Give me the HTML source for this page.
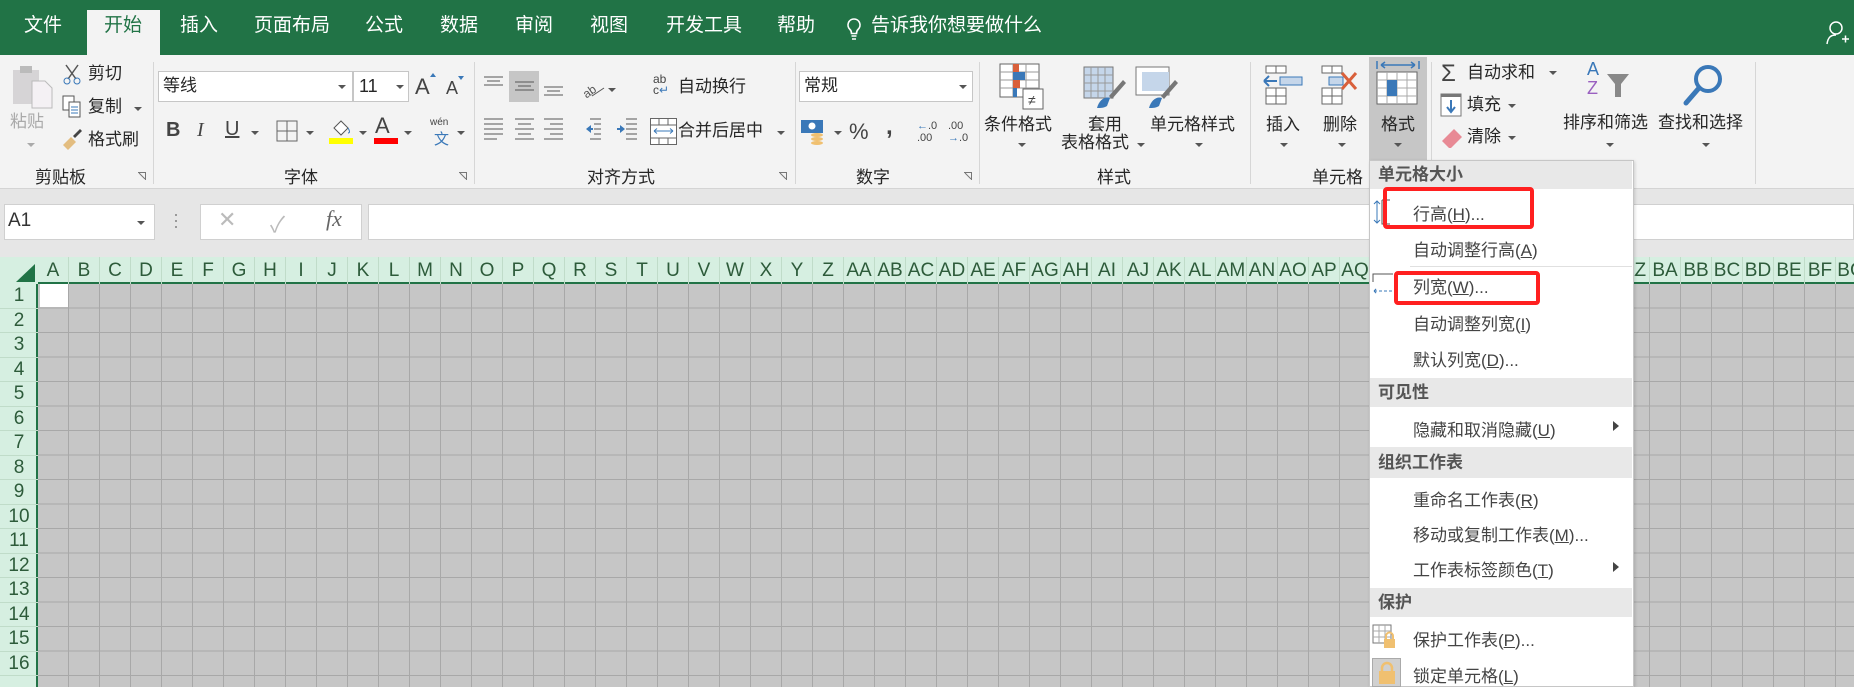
<!DOCTYPE html>
<html><head><meta charset="utf-8">
<style>
*{margin:0;padding:0;box-sizing:border-box}
body{width:1854px;height:687px;overflow:hidden;background:#f3f3f3;font-family:"Liberation Sans","Noto Sans CJK SC",sans-serif;color:#262626;position:relative}
.a{position:absolute;white-space:nowrap}
.tab{position:absolute;top:14px;font-size:19px;color:#fff;line-height:24px}
.lbl{position:absolute;font-size:17px;line-height:20px;color:#262626}
.glab{position:absolute;top:163px;font-size:17px;color:#262626}
.sep{position:absolute;top:62px;width:1px;height:122px;background:#d6d6d6}
.dd{position:absolute;width:0;height:0;border-left:4px solid transparent;border-right:4px solid transparent;border-top:4px solid #555}
.mi{position:absolute;left:1413px;font-size:17px;color:#444}
.mh{position:absolute;left:1370px;width:262px;background:#e8e8e8;font-weight:bold;font-size:17px;color:#555;padding-left:8px}
.ch{position:absolute;top:257px;height:27px;width:31px;text-align:center;font-size:19px;line-height:27px;color:#2d5b3a;border-right:1px solid #c0dcc9}
.rh{position:absolute;left:0;width:38px;height:24.5px;text-align:center;font-size:19px;line-height:24px;color:#2d5b3a;border-bottom:1px solid #c0dcc9}
</style></head><body>
<div class="a" style="left:0;top:0;width:1854px;height:55px;background:#217346"></div>
<div class="a" style="left:87px;top:10px;width:73px;height:45px;background:#f3f3f3"></div>
<div class="tab" style="left:24px">文件</div>
<div class="tab" style="left:104px;color:#217346">开始</div>
<div class="tab" style="left:180px">插入</div>
<div class="tab" style="left:254px">页面布局</div>
<div class="tab" style="left:365px">公式</div>
<div class="tab" style="left:440px">数据</div>
<div class="tab" style="left:515px">审阅</div>
<div class="tab" style="left:590px">视图</div>
<div class="tab" style="left:666px">开发工具</div>
<div class="tab" style="left:777px">帮助</div>
<svg class="a" style="left:846px;top:17px" width="16" height="26"><path d="M8 2a6 6 0 0 0-4 10.5c1 1 1.5 2 1.5 4h5c0-2 .5-3 1.5-4A6 6 0 0 0 8 2zM5.5 19h5M6 22h4" stroke="#fff" stroke-width="1.6" fill="none"/></svg>
<div class="tab" style="left:871px">告诉我你想要做什么</div>
<svg class="a" style="left:1826px;top:20px" width="24" height="26"><circle cx="10" cy="8" r="6" stroke="#fff" stroke-width="1.5" fill="none"/><path d="M1 24c1-7 4-9 9-9M16 19h7M19.5 15.5v7" stroke="#fff" stroke-width="1.5" fill="none"/></svg>

<div class="a" style="left:0;top:188px;width:1854px;height:1px;background:#d4d4d4"></div>
<div class="sep" style="left:153px"></div><div class="sep" style="left:474px"></div><div class="sep" style="left:795px"></div><div class="sep" style="left:979px"></div><div class="sep" style="left:1250px"></div><div class="sep" style="left:1431px"></div><div class="sep" style="left:1755px"></div>

<svg class="a" style="left:12px;top:64px" width="42" height="46"><rect x="1" y="6" width="26" height="34" fill="#d6d4d6"/><rect x="8" y="2" width="12" height="7" fill="#bbb"/><path d="M20 17h13l7 7v20H20z" fill="#f4f1f4" stroke="#bbb"/></svg>
<div class="lbl" style="left:10px;top:112px;color:#aaa">粘贴</div>
<div class="dd" style="left:27px;top:143px;border-top-color:#aaa"></div>
<svg class="a" style="left:62px;top:63px" width="20" height="22"><path d="M4 2l10 14M16 2L6 16" stroke="#555" stroke-width="1.5"/><circle cx="5" cy="18" r="3" stroke="#3a78b8" fill="none"/><circle cx="15" cy="18" r="3" stroke="#3a78b8" fill="none"/></svg>
<div class="lbl" style="left:88px;top:64px">剪切</div>
<svg class="a" style="left:62px;top:95px" width="20" height="24"><rect x="1" y="1" width="11" height="14" fill="#fff" stroke="#555"/><rect x="7" y="7" width="11" height="15" fill="#fff" stroke="#555"/><path d="M9 12h7M9 15h7M9 18h7" stroke="#3a78b8"/></svg>
<div class="lbl" style="left:88px;top:97px">复制</div><div class="dd" style="left:134px;top:107px"></div>
<svg class="a" style="left:61px;top:127px" width="22" height="24"><path d="M2 18l8-8 5 5-8 8z" fill="#e3bd80"/><path d="M12 9l7-7 2 2-7 7z" fill="#444"/></svg>
<div class="lbl" style="left:88px;top:130px">格式刷</div>
<div class="glab" style="left:35px">剪贴板</div>
<svg class="a" style="left:138px;top:172px" width="8" height="8"><path d="M0 .5h7.5V8M1 1l6 6" stroke="#777" fill="none"/></svg>

<div class="a" style="left:158px;top:71px;width:195px;height:31px;background:#fff;border:1px solid #c6c6c6"></div>
<div class="lbl" style="left:163px;top:76px">等线</div><div class="dd" style="left:338px;top:85px"></div>
<div class="a" style="left:353px;top:71px;width:56px;height:31px;background:#fff;border:1px solid #c6c6c6"></div>
<div class="lbl" style="left:359px;top:76px;font-size:18px">11</div><div class="dd" style="left:396px;top:85px"></div>
<div class="a" style="left:415px;top:74px;font-size:22px;color:#444">A</div><div class="a" style="left:430px;top:73px;border-left:3px solid transparent;border-right:3px solid transparent;border-bottom:4px solid #3a78b8"></div>
<div class="a" style="left:446px;top:78px;font-size:18px;color:#444">A</div><div class="a" style="left:458px;top:76px;border-left:3px solid transparent;border-right:3px solid transparent;border-top:4px solid #3a78b8"></div>
<div class="a" style="left:166px;top:119px;font-size:20px;font-weight:bold;color:#444">B</div>
<div class="a" style="left:197px;top:119px;font-size:20px;font-style:italic;font-family:'Liberation Serif',serif;color:#444">I</div>
<div class="a" style="left:225px;top:118px;font-size:20px;text-decoration:underline;color:#444">U</div><div class="dd" style="left:251px;top:131px"></div>
<svg class="a" style="left:276px;top:120px" width="22" height="22"><rect x="1" y="1" width="20" height="20" stroke="#666" fill="none"/><path d="M11 1v20M1 11h20" stroke="#666"/></svg><div class="dd" style="left:306px;top:131px"></div>
<svg class="a" style="left:329px;top:116px" width="24" height="28"><path d="M5 12l7-7 7 7-7 7z" stroke="#555" fill="#fff"/><path d="M19 12c2 3 2 5 0 5" stroke="#3a78b8" fill="none"/><rect x="0" y="22" width="24" height="6" fill="#ffff00"/></svg><div class="dd" style="left:359px;top:131px"></div>
<div class="a" style="left:375px;top:113px;font-size:22px;color:#444">A</div><div class="a" style="left:374px;top:138px;width:24px;height:6px;background:#f00"></div><div class="dd" style="left:404px;top:131px"></div>
<div class="a" style="left:430px;top:117px;font-size:10px;color:#444">wén</div><div class="a" style="left:434px;top:128px;font-size:15px;color:#3a78b8">文</div><div class="dd" style="left:457px;top:131px"></div>
<div class="glab" style="left:284px">字体</div>
<svg class="a" style="left:459px;top:172px" width="8" height="8"><path d="M0 .5h7.5V8M1 1l6 6" stroke="#777" fill="none"/></svg>

<div class="a" style="left:509px;top:71px;width:30px;height:31px;background:#c6c6c6"></div>
<svg class="a" style="left:484px;top:74px" width="90" height="26"><g stroke="#555"><path d="M0 3h19M3 7h13M0 11h19"/><path d="M31 8h19M34 12h13M31 16h19"/><path d="M60 13h19M63 17h13M60 21h19"/></g></svg>
<svg class="a" style="left:582px;top:78px" width="24" height="22"><text x="0" y="17" font-size="12" fill="#555" transform="rotate(-35 8 12)">ab</text><path d="M10 18l12-8" stroke="#555"/></svg><div class="dd" style="left:608px;top:88px"></div>
<svg class="a" style="left:484px;top:117px" width="160" height="28"><g stroke="#555"><path d="M0 2h19M0 7h19M0 12h19M0 17h19M0 22h13"/><path d="M31 2h19M34 7h13M31 12h19M34 17h13M31 22h19"/><path d="M60 2h19M66 7h13M60 12h19M66 17h13M60 22h19"/><path d="M106 2h11M110 7h7M110 12h7M110 17h7M106 22h11"/><path d="M142 2h11M142 7h11M142 12h11M142 17h11M142 22h11"/></g><path d="M102 12l5-4v8z M136 8l5 4-5 4z" fill="#3a78b8"/><path d="M104 12h5M133 12h5" stroke="#3a78b8" stroke-width="2"/></svg>
<div class="a" style="left:653px;top:74px;font-size:12px;line-height:11px;color:#444">ab<br>c<span style="color:#3a78b8">↵</span></div>
<div class="lbl" style="left:678px;top:77px">自动换行</div>
<svg class="a" style="left:650px;top:118px" width="27" height="27"><rect x=".5" y=".5" width="26" height="26" stroke="#666" fill="#fff"/><path d="M1 7h25M1 20h25M9 1v6M18 1v6M9 20v6M18 20v6" stroke="#666"/><path d="M4 13h19M4 13l3-2.5M4 13l3 2.5M23 13l-3-2.5M23 13l-3 2.5" stroke="#3a78b8"/></svg>
<div class="lbl" style="left:678px;top:121px">合并后居中</div><div class="dd" style="left:777px;top:131px"></div>
<div class="glab" style="left:587px">对齐方式</div>
<svg class="a" style="left:779px;top:172px" width="8" height="8"><path d="M0 .5h7.5V8M1 1l6 6" stroke="#777" fill="none"/></svg>

<div class="a" style="left:799px;top:71px;width:174px;height:31px;background:#fff;border:1px solid #c6c6c6"></div>
<div class="lbl" style="left:804px;top:76px">常规</div><div class="dd" style="left:959px;top:85px"></div>
<svg class="a" style="left:801px;top:119px" width="26" height="26"><rect x="0" y="1" width="22" height="13" fill="#3a78b8"/><circle cx="11" cy="7" r="3.5" fill="#fff"/><ellipse cx="16" cy="16" rx="6" ry="2" fill="#f0c070"/><ellipse cx="16" cy="20" rx="6" ry="2" fill="#f0c070"/><ellipse cx="16" cy="24" rx="6" ry="2" fill="#f0c070"/></svg><div class="dd" style="left:834px;top:131px"></div>
<div class="a" style="left:849px;top:119px;font-size:22px;color:#444">%</div>
<div class="a" style="left:886px;top:113px;font-size:24px;font-weight:bold;color:#444">,</div>
<div class="a" style="left:917px;top:120px;font-size:11px;line-height:12px;color:#444"><span style="color:#3a78b8">←</span>.0<br>.00</div>
<div class="a" style="left:948px;top:120px;font-size:11px;line-height:12px;color:#444">.00<br><span style="color:#3a78b8">→</span>.0</div>
<div class="glab" style="left:856px">数字</div>
<svg class="a" style="left:964px;top:172px" width="8" height="8"><path d="M0 .5h7.5V8M1 1l6 6" stroke="#777" fill="none"/></svg>

<svg class="a" style="left:999px;top:63px" width="46" height="50"><g stroke="#666" fill="#fff"><rect x="1" y="1" width="39" height="33"/></g><path d="M1 9h39M1 17h39M1 25h39M14 1v33M27 1v33" stroke="#999"/><rect x="14" y="1" width="6" height="8" fill="#d9603b"/><rect x="14" y="9" width="12" height="8" fill="#3a78b8"/><rect x="14" y="17" width="7" height="8" fill="#d9603b"/><rect x="14" y="25" width="4" height="9" fill="#3a78b8"/><rect x="24" y="26" width="20" height="20" fill="#fff" stroke="#666"/><text x="29" y="42" font-size="14" fill="#444">≠</text></svg>
<div class="lbl" style="left:984px;top:115px">条件格式</div><div class="dd" style="left:1018px;top:143px"></div>
<svg class="a" style="left:1083px;top:66px" width="44" height="46"><rect x="1" y="1" width="29" height="31" fill="#c5d6ea" stroke="#777"/><path d="M1 9h29M1 17h29M1 25h29M8 1v31M15 1v31M22 1v31" stroke="#999"/><path d="M26 30l14-16 3 3-14 16z" fill="#777"/><path d="M14 42c2-8 8-12 13-10l-3 8c-3 2-6 2-10 2z" fill="#3a78b8"/></svg>
<div class="lbl" style="left:1088px;top:115px">套用</div>
<div class="lbl" style="left:1061px;top:133px">表格格式</div><div class="dd" style="left:1137px;top:143px"></div>
<svg class="a" style="left:1135px;top:66px" width="46" height="46"><rect x="1" y="1" width="33" height="28" fill="#fff" stroke="#777"/><rect x="7" y="6" width="27" height="19" fill="#c5d6ea"/><path d="M26 30l14-16 3 3-14 16z" fill="#777"/><path d="M14 42c2-8 8-12 13-10l-3 8c-3 2-6 2-10 2z" fill="#3a78b8"/></svg>
<div class="lbl" style="left:1150px;top:115px">单元格样式</div><div class="dd" style="left:1195px;top:143px"></div>
<div class="glab" style="left:1097px">样式</div>

<div class="a" style="left:1369px;top:57px;width:58px;height:103px;background:#c6c6c6"></div>
<svg class="a" style="left:1263px;top:65px" width="44" height="46"><g stroke="#666" fill="#fff"><rect x="3" y="1" width="10" height="7"/><rect x="13" y="1" width="10" height="7"/><rect x="3" y="23" width="10" height="8"/><rect x="13" y="23" width="10" height="8"/><rect x="3" y="31" width="10" height="8"/><rect x="13" y="31" width="10" height="8"/></g><rect x="17" y="12" width="22" height="8" fill="#c5d6ea" stroke="#3a78b8"/><path d="M1 16h13M1 16l5-5M1 16l5 5" stroke="#3a78b8" stroke-width="2"/></svg>
<div class="lbl" style="left:1266px;top:115px">插入</div><div class="dd" style="left:1280px;top:143px"></div>
<svg class="a" style="left:1320px;top:65px" width="44" height="46"><g stroke="#666" fill="#fff"><rect x="2" y="1" width="10" height="7"/><rect x="12" y="1" width="10" height="7"/><rect x="2" y="23" width="10" height="8"/><rect x="12" y="23" width="10" height="8"/><rect x="2" y="31" width="10" height="8"/><rect x="12" y="31" width="10" height="8"/></g><rect x="9" y="12" width="14" height="8" fill="#c5d6ea" stroke="#3a78b8"/><path d="M22 8l14 16M36 8L22 24" stroke="#d9603b" stroke-width="3"/></svg>
<div class="lbl" style="left:1323px;top:115px">删除</div><div class="dd" style="left:1338px;top:143px"></div>
<svg class="a" style="left:1376px;top:60px" width="44" height="50"><path d="M1 1v8M43 1v8M5 5h34M5 5l4-3M5 5l4 3M39 5l-4-3M39 5l-4 3" stroke="#3a78b8" stroke-width="1.5"/><rect x="1" y="12" width="40" height="32" fill="#fff" stroke="#666"/><path d="M1 20h40M1 28h40M1 36h40M11 12v32M21 12v32M31 12v32" stroke="#aaa"/><rect x="11" y="20" width="10" height="16" fill="#3a78b8"/></svg>
<div class="lbl" style="left:1381px;top:115px">格式</div><div class="dd" style="left:1394px;top:143px"></div>
<div class="glab" style="left:1312px">单元格</div>

<div class="a" style="left:1441px;top:60px;font-size:24px;color:#444">Σ</div>
<div class="lbl" style="left:1467px;top:63px">自动求和</div><div class="dd" style="left:1549px;top:71px"></div>
<svg class="a" style="left:1440px;top:93px" width="22" height="24"><rect x="1" y="1" width="20" height="22" fill="#fff" stroke="#777"/><rect x="1" y="1" width="20" height="3" fill="#777"/><path d="M11 7v12M7 14l4 5 4-5" stroke="#3a78b8" stroke-width="2" fill="none"/></svg>
<div class="lbl" style="left:1467px;top:95px">填充</div><div class="dd" style="left:1508px;top:104px"></div>
<svg class="a" style="left:1440px;top:126px" width="24" height="22"><path d="M2 15l12-12 8 8-12 12z" fill="#e88a95"/></svg>
<div class="lbl" style="left:1467px;top:127px">清除</div><div class="dd" style="left:1508px;top:136px"></div>
<div class="a" style="left:1587px;top:60px;font-size:18px;line-height:19px;color:#3a78b8">A<br><span style="color:#9a60c0">Z</span></div>
<svg class="a" style="left:1606px;top:73px" width="24" height="26"><path d="M1 1h22l-8 10v13h-6V11z" fill="#888"/></svg>
<svg class="a" style="left:1682px;top:63px" width="42" height="46"><circle cx="26" cy="16" r="12" stroke="#3a78b8" stroke-width="4" fill="none"/><path d="M17 25L4 40" stroke="#3a78b8" stroke-width="5" stroke-linecap="round"/></svg>
<div class="lbl" style="left:1563px;top:113px">排序和筛选</div><div class="dd" style="left:1606px;top:143px"></div>
<div class="lbl" style="left:1658px;top:113px">查找和选择</div><div class="dd" style="left:1702px;top:143px"></div>

<div class="a" style="left:0;top:189px;width:1854px;height:68px;background:#e6e6e6"></div>
<div class="a" style="left:4px;top:204px;width:151px;height:36px;background:#fff;border:1px solid #d0d0d0"></div>
<div class="a" style="left:8px;top:210px;font-size:19px;color:#333">A1</div><div class="dd" style="left:137px;top:221px"></div>
<div class="a" style="left:175px;top:214px;width:2px;height:2px;background:#999;box-shadow:0 6px #999,0 12px #999"></div>
<div class="a" style="left:200px;top:204px;width:162px;height:36px;background:#fff;border:1px solid #d0d0d0"></div>
<div class="a" style="left:218px;top:207px;font-size:22px;color:#bbb">✕</div>
<div class="a" style="left:270px;top:207px;font-size:22px;color:#bbb">✓</div>
<div class="a" style="left:326px;top:206px;font-size:22px;font-style:italic;font-family:'Liberation Serif',serif;color:#666">fx</div>
<div class="a" style="left:368px;top:204px;width:1486px;height:36px;background:#fff;border:1px solid #d0d0d0"></div>

<div class="a" style="left:0;top:257px;width:1854px;height:27px;background:#d6efe1"></div>
<svg class="a" style="left:14px;top:263px" width="22" height="20"><path d="M21 1v18H2z" fill="#217346"/></svg>
<div class="a" style="left:0;top:284px;width:38px;height:403px;background:#d6efe1;border-right:2px solid #217346"></div>
<div class="a" style="left:38px;top:284px;width:1816px;height:403px;background-color:#c6c6c6;background-image:linear-gradient(to right,#a8a8a8 1px,transparent 1px),linear-gradient(to bottom,#a8a8a8 1px,transparent 1px);background-size:31px 24.5px;background-position:30px 23.5px"></div>
<div class="a" style="left:38px;top:282px;width:1816px;height:2px;background:#217346"></div>
<div class="a" style="left:40px;top:284px;width:28px;height:23px;background:#fff"></div>
<div id="cols"></div><div id="rows"></div>
<script>
var L="A B C D E F G H I J K L M N O P Q R S T U V W X Y Z AA AB AC AD AE AF AG AH AI AJ AK AL AM AN AO AP AQ AR AS AT AU AV AW AX AY AZ BA BB BC BD BE BF BG".split(" ");
var h="";for(var i=0;i<L.length;i++){h+='<div class="ch" style="left:'+(38+i*31)+'px">'+L[i]+'</div>';}
document.getElementById("cols").innerHTML=h;
h="";for(var r=1;r<=16;r++){h+='<div class="rh" style="top:'+(284+(r-1)*24.5)+'px">'+r+'</div>';}
document.getElementById("rows").innerHTML=h;
</script>

<div class="a" style="left:1369px;top:160px;width:265px;height:527px;background:#fff;border:1px solid #c6c6c6;box-shadow:1px 1px 3px rgba(0,0,0,.15)"></div>
<div class="mh" style="top:161px;height:28px;line-height:28px">单元格大小</div>
<svg class="a" style="left:1372px;top:199px" width="22" height="26"><path d="M10 1h8M10 1v24h8" stroke="#555" fill="none"/><path d="M5 2v22M2 5l3-3 3 3M2 21l3 3 3-3" stroke="#3a78b8" fill="none"/></svg>
<div class="mi" style="top:200px">行高(<u>H</u>)...</div>
<div class="mi" style="top:236px">自动调整行高(<u>A</u>)</div>
<div class="a" style="left:1410px;top:266px;width:222px;height:1px;background:#e0e0e0"></div>
<svg class="a" style="left:1372px;top:273px" width="24" height="26"><path d="M1 9V1h20" stroke="#555" fill="none"/><path d="M2 18h20M2 18l3-3M2 18l3 3" stroke="#3a78b8" stroke-dasharray="3 2" fill="none"/></svg>
<div class="mi" style="top:273px">列宽(<u>W</u>)...</div>
<div class="mi" style="top:310px">自动调整列宽(<u>I</u>)</div>
<div class="mi" style="top:346px">默认列宽(<u>D</u>)...</div>
<div class="mh" style="top:378px;height:29px;line-height:29px">可见性</div>
<div class="mi" style="top:416px">隐藏和取消隐藏(<u>U</u>)</div>
<div class="a" style="left:1613px;top:421px;border-top:5px solid transparent;border-bottom:5px solid transparent;border-left:6px solid #444"></div>
<div class="mh" style="top:447px;height:31px;line-height:31px">组织工作表</div>
<div class="mi" style="top:486px">重命名工作表(<u>R</u>)</div>
<div class="mi" style="top:521px">移动或复制工作表(<u>M</u>)...</div>
<div class="mi" style="top:556px">工作表标签颜色(<u>T</u>)</div>
<div class="a" style="left:1613px;top:562px;border-top:5px solid transparent;border-bottom:5px solid transparent;border-left:6px solid #444"></div>
<div class="mh" style="top:588px;height:29px;line-height:29px">保护</div>
<svg class="a" style="left:1372px;top:624px" width="26" height="26"><rect x="1" y="1" width="18" height="18" fill="#fff" stroke="#777"/><path d="M1 7h18M1 13h18M7 1v18M13 1v18" stroke="#aaa"/><rect x="12" y="15" width="11" height="9" fill="#f0c070"/><path d="M14 15v-3a3.5 3.5 0 0 1 7 0v3" stroke="#f0c070" stroke-width="2" fill="none"/></svg>
<div class="mi" style="top:626px">保护工作表(<u>P</u>)...</div>
<div class="a" style="left:1372px;top:658px;width:29px;height:29px;background:#d0d0d0;border:1px solid #aaa"></div>
<svg class="a" style="left:1376px;top:661px" width="22" height="24"><rect x="3" y="10" width="16" height="13" fill="#f0c070"/><path d="M6 10V7a5 5 0 0 1 10 0v3" stroke="#f0c070" stroke-width="2.5" fill="none"/></svg>
<div class="mi" style="top:662px">锁定单元格(<u>L</u>)</div>

<div class="a" style="left:1383px;top:187px;width:151px;height:42px;border:4px solid #ff2020;border-radius:4px"></div>
<div class="a" style="left:1394px;top:271px;width:146px;height:34px;border:4px solid #ff2020;border-radius:4px"></div>
</body></html>
